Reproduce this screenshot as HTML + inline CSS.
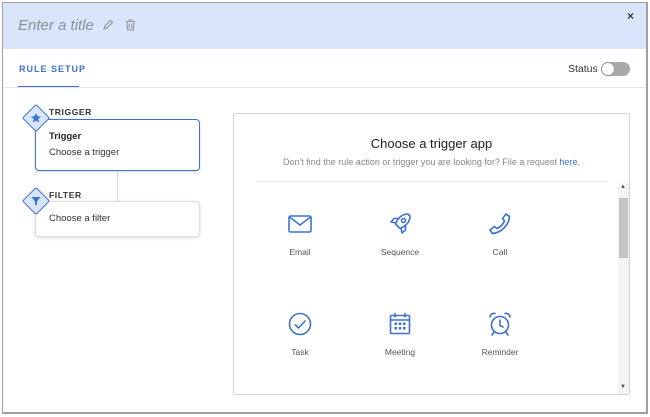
<!DOCTYPE html>
<html><head><meta charset="utf-8"><style>
*{box-sizing:border-box;margin:0;padding:0}
body{width:650px;height:417px;background:#fff;font-family:"Liberation Sans",Arial,sans-serif;position:relative;overflow:hidden}
.frame{position:absolute;left:2px;top:2px;width:646px;height:412px;border:1px solid #a0a0a0;border-right-width:2px;border-bottom-width:2px;background:#fff}
.hdr{position:absolute;left:3px;top:3px;width:643px;height:46px;background:#d8e5fa}
.abs{position:absolute}
.title{left:18px;top:17px;font-size:15px;font-style:italic;color:#8a8f99}
.tab{left:19px;top:64px;font-size:9px;font-weight:bold;letter-spacing:1px;color:#3d72d1}
.tabline{left:18px;top:86px;width:61px;height:2px;background:#3d72d1}
.sep{left:3px;top:87px;width:643px;height:1px;background:#e6e6e6}
.card{background:#fff;border-radius:4px}
.lbl{font-size:8.5px;font-weight:bold;letter-spacing:.6px;color:#333}
.dia{width:20px;height:20px;transform:rotate(45deg);background:#d8e5fa;border:1.5px solid #3d72d1;border-radius:2px}
.panel{left:233px;top:113px;width:397px;height:282px;border:1px solid #d4d4d4;border-radius:2px;background:#fff}
.it{position:absolute;width:80px;text-align:center;font-size:8.5px;color:#555}
</style></head><body>
<div class="frame"></div>
<div class="hdr"></div>
<div class="abs title">Enter a title</div>
<svg class="abs" style="left:102px;top:19px" width="12" height="12" viewBox="0 0 12 12"><path d="M2 10 L3 7 L8.5 1.5 L10.5 3.5 L5 9 Z" fill="none" stroke="#999" stroke-width="1.2"/></svg>
<svg class="abs" style="left:125px;top:19px" width="11" height="12" viewBox="0 0 11 12"><path d="M1 2.5H10M4 2.5V1H7V2.5M2 2.5L2.6 11H8.4L9 2.5M4.2 4.5V9.5M6.8 4.5V9.5" fill="none" stroke="#999" stroke-width="1.1"/></svg>
<div class="abs" style="left:627px;top:9px;font-size:12px;color:#333;font-weight:bold">×</div>
<div class="abs tab">RULE SETUP</div>
<div class="abs tabline"></div>
<div class="abs sep"></div>
<div class="abs" style="left:568px;top:63px;font-size:10.5px;color:#333">Status</div>
<div class="abs" style="left:601px;top:62px;width:29px;height:14px;border-radius:7px;background:#a9a9a9"></div>
<div class="abs" style="left:601px;top:62px;width:14px;height:14px;border-radius:50%;background:#fff;border:1px solid #999"></div>

<div class="abs" style="left:117px;top:170px;width:1px;height:32px;background:#ddd"></div>
<div class="abs card" style="left:35px;top:119px;width:165px;height:52px;border:1.5px solid #3d72d1;box-shadow:0 1px 2px rgba(0,0,0,.15)"></div>
<div class="abs" style="left:49px;top:131px;font-size:9.5px;font-weight:bold;color:#222">Trigger</div>
<div class="abs" style="left:49px;top:147px;font-size:9.5px;color:#333">Choose a trigger</div>
<div class="abs lbl" style="left:49px;top:107px">TRIGGER</div>
<div class="abs dia" style="left:26px;top:108px"></div>
<svg class="abs" style="left:30px;top:112px" width="12" height="12" viewBox="0 0 12 12"><path d="M6 1L7.5 4.3L11 4.6L8.3 6.9L9.1 10.4L6 8.6L2.9 10.4L3.7 6.9L1 4.6L4.5 4.3Z" fill="#3d72d1"/></svg>

<div class="abs card" style="left:35px;top:201px;width:165px;height:36px;border:1px solid #ddd;box-shadow:0 1px 3px rgba(0,0,0,.15)"></div>
<div class="abs" style="left:49px;top:213px;font-size:9.5px;color:#333">Choose a filter</div>
<div class="abs lbl" style="left:49px;top:190px">FILTER</div>
<div class="abs dia" style="left:26px;top:191px"></div>
<svg class="abs" style="left:30px;top:195px" width="12" height="12" viewBox="0 0 12 12"><path d="M1.5 2H10.5L7 6.5V10.5L5 9.5V6.5Z" fill="#3d72d1"/></svg>

<div class="abs panel"></div>
<div class="abs" style="left:233px;top:136px;width:397px;text-align:center;font-size:13px;color:#222">Choose a trigger app</div>
<div class="abs" style="left:233px;top:157px;width:397px;text-align:center;font-size:9px;color:#888">Don't find the rule action or trigger you are looking for? File a request <span style="color:#3d72d1">here</span>.</div>
<div class="abs" style="left:256px;top:181px;width:352px;height:1px;background:#e8e8e8"></div>
<div class="abs" style="left:618px;top:183px;width:11px;height:211px;background:#f4f4f4"></div>
<div class="abs" style="left:619px;top:198px;width:9px;height:60px;background:#c4c4c4"></div>
<div class="abs" style="left:620px;top:184px;font-size:6px;color:#555">▲</div>
<div class="abs" style="left:620px;top:384px;font-size:6px;color:#555">▼</div>

<svg class="abs" style="left:287px;top:213px" width="26" height="22" viewBox="0 0 26 22" fill="none" stroke="#3d72d1" stroke-width="1.6"><rect x="2" y="3" width="22" height="16" rx="1.5"/><path d="M2.5 4L13 12L23.5 4"/></svg>
<svg class="abs" style="left:387px;top:211px" width="26" height="26" viewBox="0 0 26 26" fill="none" stroke="#3d72d1" stroke-width="1.6" stroke-linejoin="round"><path d="M21 3C15 3 11 7 8.5 13L13 17.5C19 15 23 11 23 5Z"/><circle cx="16.5" cy="9.5" r="2"/><path d="M9 12L4 11L7 7.5L12 7.5M14 17L15 22L18.5 19L18.5 14"/></svg>
<svg class="abs" style="left:487px;top:211px" width="26" height="26" viewBox="0 0 26 26" fill="none" stroke="#3d72d1" stroke-width="1.7" stroke-linejoin="round"><g transform="translate(26,0) scale(-1,1)"><path d="M7 3L10.5 7.5L8.5 10C10 13.5 12.5 16 16 17.5L18.5 15.5L23 19L20.5 22.5C12 22 4 14 3.5 5.5Z"/></g></svg>
<div class="it" style="left:260px;top:247px">Email</div>
<div class="it" style="left:360px;top:247px">Sequence</div>
<div class="it" style="left:460px;top:247px">Call</div>

<svg class="abs" style="left:287px;top:311px" width="26" height="26" viewBox="0 0 26 26" fill="none" stroke="#3d72d1" stroke-width="1.6"><circle cx="13" cy="13" r="10.5"/><path d="M8 13.5L11.5 17L18.5 9.5"/></svg>
<svg class="abs" style="left:387px;top:311px" width="26" height="26" viewBox="0 0 26 26" fill="none" stroke="#3d72d1" stroke-width="1.6"><rect x="3.5" y="4.5" width="19" height="18" rx="1"/><path d="M3.5 9H22.5M8 2V6M18 2V6"/><g fill="#3d72d1" stroke="none"><rect x="7.5" y="11.5" width="2.5" height="2.5"/><rect x="11.7" y="11.5" width="2.5" height="2.5"/><rect x="16" y="11.5" width="2.5" height="2.5"/><rect x="7.5" y="16" width="2.5" height="2.5"/><rect x="11.7" y="16" width="2.5" height="2.5"/><rect x="16" y="16" width="2.5" height="2.5"/></g></svg>
<svg class="abs" style="left:487px;top:311px" width="26" height="26" viewBox="0 0 26 26" fill="none" stroke="#3d72d1" stroke-width="1.6" stroke-linecap="round"><circle cx="13" cy="14" r="8.5"/><path d="M13 9V14.5L16 16M3 6A4 4 0 0 1 8 2.5M23 6A4 4 0 0 0 18 2.5M7 21L5 24M19 21L21 24"/></svg>
<div class="it" style="left:260px;top:347px">Task</div>
<div class="it" style="left:360px;top:347px">Meeting</div>
<div class="it" style="left:460px;top:347px">Reminder</div>
</body></html>
